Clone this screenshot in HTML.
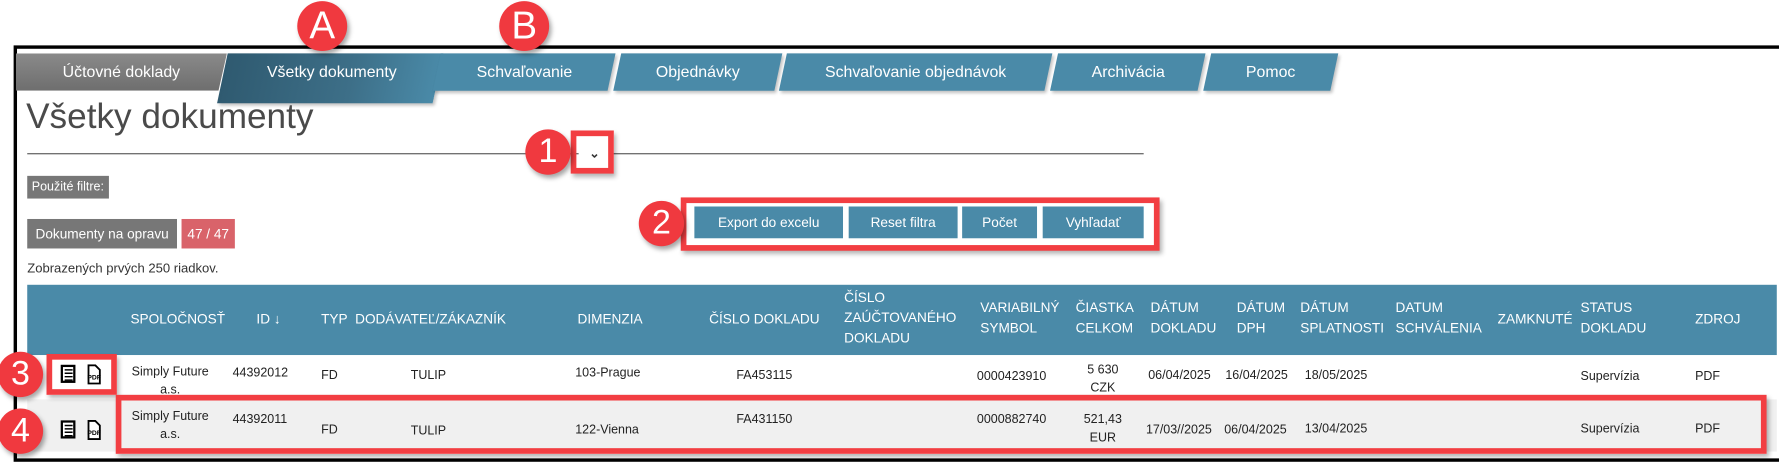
<!DOCTYPE html>
<html><head><meta charset="utf-8"><style>
*{margin:0;padding:0;box-sizing:border-box}
body{width:1779px;height:463px;background:#fff;position:relative;overflow:hidden;font-family:"Liberation Sans",sans-serif;color:#222}
#w{position:absolute;left:0;top:0;width:1568px;height:408px;transform:scale(1.1346);transform-origin:0 0}
.a{position:absolute;white-space:nowrap}
.frame{position:absolute;left:12px;top:40px;width:1559px;height:367px;border:3px solid #000}
.tab{position:absolute;top:47px;height:33px;color:#fff;font-size:14px;line-height:22px;text-align:center;padding-top:5px;transform:skewX(-12deg);background:#4a8aa8;box-shadow:2px 2px 3px rgba(0,0,0,.25)}
.tab span{display:inline-block;transform:skewX(12deg)}
.btn{position:absolute;top:182px;height:28px;background:#4a8aa8;color:#fff;font-size:12px;line-height:28px;text-align:center}
.th{position:absolute;color:#fff;font-size:12px;line-height:18px}
.td{position:absolute;font-size:11px;line-height:16px;color:#222}
.circ{position:absolute;width:40px;height:40px;border-radius:50%;background:#f0393f;color:#fff;font-size:30px;line-height:40px;text-align:center;box-shadow:2px 3px 4px rgba(0,0,0,.35)}
.rbox{position:absolute;border:5px solid #f23e42;box-shadow:2px 3px 4px rgba(0,0,0,.3)}
</style></head><body><div id="w">
<div class="frame"></div>
<div class="tab" style="left:14px;width:186px;background:linear-gradient(#8a8a8a,#6e6e6e);transform:none;clip-path:polygon(0 0,100% 0,96% 100%,0 100%)"><span style="transform:none">Účtovné doklady</span></div>
<div class="tab" style="left:196px;width:190px;height:44px;background:linear-gradient(90deg,#2f5a70,#3d6f88 60%,#4a8aa8)"><span>Všetky dokumenty</span></div>
<div class="tab" style="left:385px;width:154px"><span>Schvaľovanie</span></div>
<div class="tab" style="left:544px;width:142px"><span>Objednávky</span></div>
<div class="tab" style="left:690px;width:234px"><span>Schvaľovanie objednávok</span></div>
<div class="tab" style="left:929px;width:130px"><span>Archivácia</span></div>
<div class="tab" style="left:1064px;width:112px"><span>Pomoc</span></div>
<div class="a" style="left:23px;top:85px;font-size:31px;color:#4a4a4a;font-weight:300">Všetky dokumenty</div>
<div class="a" style="left:24px;top:135px;width:984px;height:1px;background:#555"></div>
<div class="a" style="left:510px;top:128px;width:28px;height:16px;background:#fff;color:#333;font-size:11px;text-align:center;line-height:16px;font-weight:bold">⌄</div>
<div class="rbox" style="left:503px;top:115px;width:38px;height:38px"></div>
<div class="circ" style="left:463px;top:114px">1</div>
<div class="a" style="left:24px;top:155px;height:20px;padding:0 4px;background:#777;color:#fff;font-size:11px;line-height:20px">Použité filtre:</div>
<div class="a" style="left:24px;top:193px;width:132px;height:26px;background:#777;color:#fff;font-size:12px;line-height:26px;text-align:center">Dokumenty na opravu</div>
<div class="a" style="left:160px;top:193px;width:47px;height:26px;background:#d9636a;color:#fff;font-size:12px;line-height:26px;text-align:center">47 / 47</div>
<div class="btn" style="left:612px;width:131px">Export do excelu</div>
<div class="btn" style="left:748px;width:96px">Reset filtra</div>
<div class="btn" style="left:848px;width:66px">Počet</div>
<div class="btn" style="left:919px;width:89px">Vyhľadať</div>
<div class="rbox" style="left:600px;top:174px;width:422px;height:47px"></div>
<div class="circ" style="left:563px;top:177px">2</div>
<div class="a" style="left:24px;top:231px;font-size:11.5px;color:#333">Zobrazených prvých 250 riadkov.</div>
<div class="a" style="left:24px;top:251px;width:1542px;height:62px;background:#4a8aa8"></div>
<div class="a" style="left:24px;top:313px;width:1542px;height:39px;background:#fff"></div>
<div class="a" style="left:24px;top:352px;width:1542px;height:46px;background:#f0f0f0"></div>
<div class="th" style="left:115px;top:272px">SPOLOČNOSŤ</div>
<div class="th" style="left:226px;top:272px">ID ↓</div>
<div class="th" style="left:283px;top:272px">TYP</div>
<div class="th" style="left:313px;top:272px">DODÁVATEĽ/ZÁKAZNÍK</div>
<div class="th" style="left:509px;top:272px">DIMENZIA</div>
<div class="th" style="left:625px;top:272px">ČÍSLO DOKLADU</div>
<div class="th" style="left:744px;top:253px">ČÍSLO<br>ZAÚČTOVANÉHO<br>DOKLADU</div>
<div class="th" style="left:864px;top:262px">VARIABILNÝ<br>SYMBOL</div>
<div class="th" style="left:948px;top:262px">ČIASTKA<br>CELKOM</div>
<div class="th" style="left:1014px;top:262px">DÁTUM<br>DOKLADU</div>
<div class="th" style="left:1090px;top:262px">DÁTUM<br>DPH</div>
<div class="th" style="left:1146px;top:262px">DÁTUM<br>SPLATNOSTI</div>
<div class="th" style="left:1230px;top:262px">DATUM<br>SCHVÁLENIA</div>
<div class="th" style="left:1320px;top:272px">ZAMKNUTÉ</div>
<div class="th" style="left:1393px;top:262px">STATUS<br>DOKLADU</div>
<div class="th" style="left:1494px;top:272px">ZDROJ</div>
<div class="td" style="left:110px;top:320px;width:80px;text-align:center">Simply Future<br>a.s.</div>
<div class="td" style="left:205px;top:321px">44392012</div>
<div class="td" style="left:283px;top:323px">FD</div>
<div class="td" style="left:362px;top:323px">TULIP</div>
<div class="td" style="left:507px;top:321px">103-Prague</div>
<div class="td" style="left:649px;top:323px">FA453115</div>
<div class="td" style="left:861px;top:324px">0000423910</div>
<div class="td" style="left:950px;top:318px;width:44px;text-align:center">5 630<br>CZK</div>
<div class="td" style="left:1012px;top:323px">06/04/2025</div>
<div class="td" style="left:1080px;top:323px">16/04/2025</div>
<div class="td" style="left:1150px;top:323px">18/05/2025</div>
<div class="td" style="left:1393px;top:324px">Supervízia</div>
<div class="td" style="left:1494px;top:324px">PDF</div>
<div class="td" style="left:110px;top:359px;width:80px;text-align:center">Simply Future<br>a.s.</div>
<div class="td" style="left:205px;top:362px">44392011</div>
<div class="td" style="left:283px;top:371px">FD</div>
<div class="td" style="left:362px;top:372px">TULIP</div>
<div class="td" style="left:507px;top:371px">122-Vienna</div>
<div class="td" style="left:649px;top:362px">FA431150</div>
<div class="td" style="left:861px;top:362px">0000882740</div>
<div class="td" style="left:950px;top:362px;width:44px;text-align:center">521,43<br>EUR</div>
<div class="td" style="left:1010px;top:371px">17/03//2025</div>
<div class="td" style="left:1079px;top:371px">06/04/2025</div>
<div class="td" style="left:1150px;top:370px">13/04/2025</div>
<div class="td" style="left:1393px;top:370px">Supervízia</div>
<div class="td" style="left:1494px;top:370px">PDF</div>
<svg class="a" style="left:53px;top:321px" width="40" height="80" viewBox="0 0 40 80">
<g id="ic"><rect x="1.5" y="1.5" width="11" height="14" fill="#fff" stroke="#000" stroke-width="2"/><path d="M4 5h7M4 8h7M4 11h7M4 14h7" stroke="#000" stroke-width="1.3"/>
<path d="M25 1h6l4 4v12h-10z" fill="#fff" stroke="#000" stroke-width="1.6"/><text x="30" y="13.5" font-size="6" font-weight="bold" text-anchor="middle" font-family="Liberation Sans">PDF</text></g>
<use href="#ic" y="49"/>
</svg>
<div class="rbox" style="left:41px;top:312px;width:62px;height:36px"></div>
<div class="rbox" style="left:102px;top:348px;width:1455px;height:52px"></div>
<div class="circ" style="left:-2px;top:310px">3</div>
<div class="circ" style="left:-2px;top:360px">4</div>
<div class="circ" style="left:262px;top:1px;width:44px;height:44px;line-height:44px;font-size:34px">A</div>
<div class="circ" style="left:440px;top:1px;width:44px;height:44px;line-height:44px;font-size:34px">B</div>
</div></body></html>
